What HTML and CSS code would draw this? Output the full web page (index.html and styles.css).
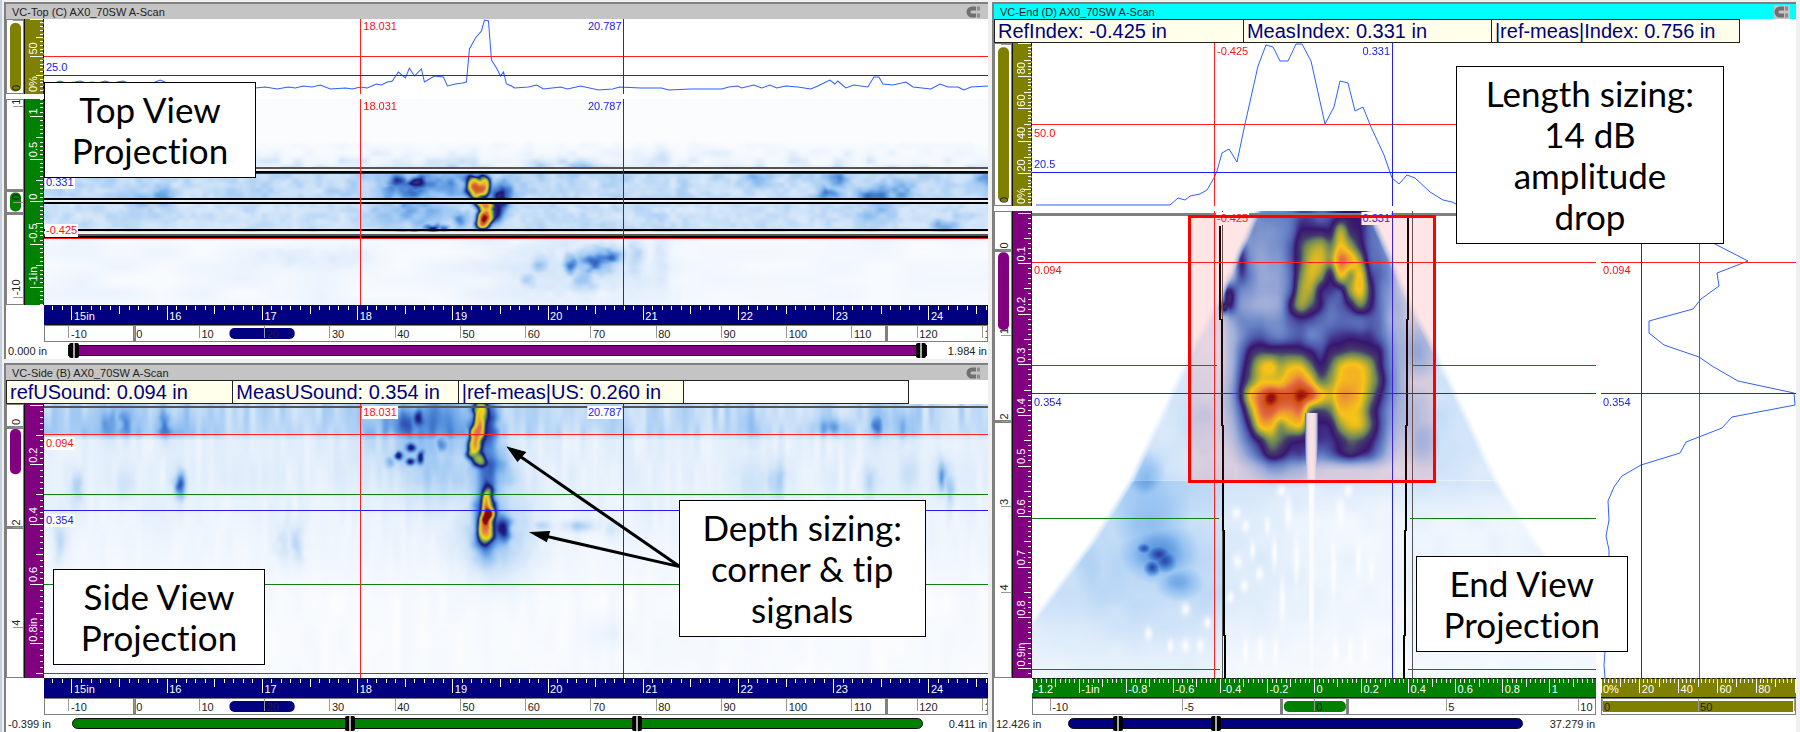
FILE: index.html
```html
<!DOCTYPE html>
<html lang="en">
<head>
  <meta charset="UTF-8" />
  <meta name="viewport" content="width=device-width, initial-scale=1.0" />
  <title>AX0_70SW A-Scan</title>
  <link rel="stylesheet" href="styles.css">
</head>
<body>

  <main class="workspace">
    <div class="column">

      <!-- Top view -->
      <section class="panel">
        <header class="title-bar">
          <h2>VC-Top (C) AX0_70SW A-Scan</h2>
          <svg class="magnet" viewBox="0 0 16 14"><path d="M10 3.500H6a3.500 3.500 0 0 0 0 7H10" /><path class="tip" d="M11 3.500h3M11 10.500h3" /></svg>
        </header>
        <div class="views views-top">
          <div class="overview vertical" data-from="100" data-to="0" data-step="100" data-thumb="96,2" data-thumb-color="olive"></div>
          <div class="ruler vertical olive" data-from="100" data-to="0" data-step="50" data-mid="25" data-minor="5" data-skip="100" data-unit="%" data-unit-at="0"></div>
          <div class="plot">
            <svg class="lines" viewBox="44 19 943 75" preserveAspectRatio="none">
              <polyline class="trace" points="44,83 52,84 60,81 66,83 75,82 80,81 86,83 92,82 98,83 105,81 112,83 123,81 128,83 135,83 150,84 160,80 167,83 200,86 255,88 265,87 277,89 288,87 295,88 303,86 312,87 320,85 330,89 345,88 352,89 360,87 367,88 376,84 381,85 387,82 392,81 398,72 405,78 409,68 414,76 421,69 424,82 434,76 443,77 447,86 455,84 462,83 466,82 469,49 475,38 481,31 484,20 488,21 491,60 496,68 500,76 503,72 506,84 511,86 514,88 528,87 536,85 543,89 560,87 567,89 580,86 598,90 612,89 619,87 640,88 661,88 668,90 690,89 721,89 728,87 737,86 741,88 753,85 761,88 769,85 776,88 785,86 797,87 810,89 817,86 829,80 834,84 837,81 845,88 853,85 867,87 873,77 878,77 882,84 892,85 905,82 912,87 930,89 939,84 947,87 957,87 963,90 970,87 987,86" />
              <path class="red" d="M44 56H987M360 19V94" />
              <path class="blue" d="M44 75H987M623 19V94" />
            </svg>
            <span class="tag red" data-x="362" data-y="20">18.031</span>
            <span class="tag blue before" data-x="622" data-y="20">20.787</span>
            <span class="tag blue" data-x="45" data-y="61">25.0</span>
          </div>

          <div class="overview vertical second" data-from="10.7" data-to="-10.7" data-step="10" data-thumb="1,-1" data-thumb-color="green" data-bounds="1.2,-1.2"></div>
          <div class="ruler vertical green second" data-from="1.205" data-to="-1.21" data-step="0.5" data-mid="0.25" data-minor="0.05" data-unit="in" data-unit-at="-1"></div>
          <div class="plot second">
            <canvas id="topScan" width="943" height="206"></canvas>
            <svg class="lines" viewBox="44 99 943 206" preserveAspectRatio="none">
              <path class="gap" d="M44 170H987M44 201H987M44 233H987" />
              <path class="gray" d="M44 168H987M44 235H987" />
              <path class="black" d="M44 172H987M44 199H987M44 203H987M44 230H987M44 237H987" />
              <path class="red" d="M44 238H987M360 99V305" />
              <path class="blue" d="M44 173H987M623 99V305" />
            </svg>
            <span class="tag red" data-x="362" data-y="100">18.031</span>
            <span class="tag blue before" data-x="622" data-y="100">20.787</span>
            <span class="tag blue filled" data-x="45" data-y="176">0.331</span>
            <span class="tag red filled" data-x="45" data-y="224">-0.425</span>
          </div>

          <div class="ruler horizontal navy under" data-from="14.706" data-to="24.62" data-step="1" data-mid="0.5" data-minor="0.1" data-unit="in" data-unit-at="15"></div>
          <div class="overview horizontal under" data-from="-13.67" data-to="130.7" data-step="10" data-thumb="14.6,24.6" data-thumb-color="navy" data-bounds="0,115.3"></div>
          <div class="slider-row">
            <output>0.000 in</output>
            <div class="slider purple">
              <input type="range" aria-label="Depth start" min="0" max="100" value="0">
              <input type="range" aria-label="Depth end" min="0" max="100" value="100">
            </div>
            <output>1.984 in</output>
          </div>
        </div>
        <p class="note note-top">Top View Projection</p>
      </section>

      <!-- Side view -->
      <section class="panel">
        <header class="title-bar">
          <h2>VC-Side (B) AX0_70SW A-Scan</h2>
          <svg class="magnet" viewBox="0 0 16 14"><path d="M10 3.500H6a3.500 3.500 0 0 0 0 7H10" /><path class="tip" d="M11 3.500h3M11 10.500h3" /></svg>
        </header>
        <div class="readouts four">
          <span>refUSound: 0.094 in</span>
          <span>MeasUSound: 0.354 in</span>
          <span>|ref-meas|US: 0.260 in</span>
          <span class="empty"></span>
        </div>
        <div class="views views-side">
          <div class="overview vertical" data-from="-0.44" data-to="4.98" data-step="2" data-thumb="0.04,0.94" data-thumb-color="purple" data-bounds="0,2"></div>
          <div class="ruler vertical purple" data-from="-0.004" data-to="0.915" data-step="0.2" data-mid="0.1" data-minor="0.02" data-skip="0" data-unit="in" data-unit-at="0.8"></div>
          <div class="plot">
            <canvas id="sideScan" width="943" height="273"></canvas>
            <svg class="lines" viewBox="44 404 943 273" preserveAspectRatio="none">
              <path class="gray" d="M44 407H987" />
              <path class="green" d="M44 494H987M44 584H987M44 673H987" />
              <path class="red" d="M44 434H987M360 404V677" />
              <path class="blue" d="M44 510H987M623 404V677" />
              <path class="arrow" d="M679 566L518 455M679 566L542 535" />
              <path class="arrow-head" d="M507 447L525 452L517 461ZM530 532L549 531L546 541Z" />
            </svg>
            <span class="tag red filled" data-x="362" data-y="406">18.031</span>
            <span class="tag blue filled before" data-x="622" data-y="406">20.787</span>
            <span class="tag red filled" data-x="45" data-y="437">0.094</span>
            <span class="tag blue filled" data-x="45" data-y="514">0.354</span>
          </div>

          <div class="ruler horizontal navy under" data-from="14.706" data-to="24.62" data-step="1" data-mid="0.5" data-minor="0.1" data-unit="in" data-unit-at="15"></div>
          <div class="overview horizontal under" data-from="-13.67" data-to="130.7" data-step="10" data-thumb="14.6,24.6" data-thumb-color="navy" data-bounds="0,115.3"></div>
          <div class="slider-row">
            <output>-0.399 in</output>
            <div class="slider green rounded">
              <input type="range" aria-label="Index start" min="0" max="1000" value="324">
              <input type="range" aria-label="Index end" min="0" max="1000" value="666">
            </div>
            <output>0.411 in</output>
          </div>
        </div>
        <p class="note note-side">Side View Projection</p>
        <p class="note note-depth">Depth sizing: corner &amp; tip signals</p>
      </section>
    </div>

    <!-- End view -->
    <section class="panel active">
      <header class="title-bar">
        <h2>VC-End (D) AX0_70SW A-Scan</h2>
        <svg class="magnet" viewBox="0 0 16 14"><path d="M10 3.500H6a3.500 3.500 0 0 0 0 7H10" /><path class="tip" d="M11 3.500h3M11 10.500h3" /></svg>
      </header>
      <div class="readouts three">
        <span>RefIndex: -0.425 in</span>
        <span>MeasIndex: 0.331 in</span>
        <span>|ref-meas|Index: 0.756 in</span>
      </div>
      <div class="views views-end">
        <div class="overview vertical" data-from="100" data-to="0" data-step="100" data-thumb="98,2" data-thumb-color="olive"></div>
        <div class="ruler vertical olive" data-from="100.5" data-to="0" data-step="20" data-mid="10" data-minor="2" data-skip="100" data-unit="%" data-unit-at="0"></div>
        <div class="plot">
          <svg class="lines" viewBox="1032 43 564 163" preserveAspectRatio="none">
            <polyline class="trace" points="1036,205 1170,205 1178,198 1185,200 1190,196 1200,194 1207,190 1214,178 1217,171 1222,153 1229,149 1237,162 1245,124 1258,66 1266,45 1273,47 1280,61 1288,61 1296,44 1302,44 1311,61 1325,124 1334,107 1340,81 1348,83 1355,111 1363,107 1371,127 1384,155 1392,178 1399,184 1407,175 1415,178 1430,192 1443,200 1452,202 1460,206" />
            <path class="red" d="M1032 124H1596M1214 43V206" />
            <path class="blue" d="M1032 172H1596M1392 43V206" />
          </svg>
          <span class="tag red" data-x="1216" data-y="45">-0.425</span>
          <span class="tag blue before" data-x="1391" data-y="45">0.331</span>
          <span class="tag red" data-x="1033" data-y="127">50.0</span>
          <span class="tag blue" data-x="1033" data-y="158">20.5</span>
        </div>

        <div class="overview vertical second" data-from="-0.45" data-to="4.99" data-step="1" data-thumb="0.02,0.93" data-thumb-color="purple" data-bounds="0,2"></div>
        <div class="ruler vertical purple second" data-from="-0.004" data-to="0.919" data-step="0.1" data-mid="0.05" data-minor="0.01" data-skip="0" data-unit="in" data-unit-at="0.9"></div>
        <div class="plot second">
          <canvas id="endScan" width="564" height="467"></canvas>
          <svg class="lines" viewBox="1032 211 564 467" preserveAspectRatio="none">
            <path class="frame-line" d="M1032 214H1596" />
            <path class="green" d="M1032 365H1217M1412 365H1596M1032 518H1219M1410 518H1596M1032 669H1220M1408 669H1596" />
            <path class="gray thin" d="M1222 211V678M1412 211V678" />
            <path class="black" d="M1220 226V319L1222 320V425L1223 426V530L1224 531V635L1225 636V678M1408 218V319L1407 320V425L1406 426V530L1405 531V635L1404 636V678" />
          </svg>
          <span class="tag red filled" data-x="1216" data-y="212">-0.425</span>
          <span class="tag blue filled before" data-x="1391" data-y="212">0.331</span>
          <svg class="lines" viewBox="1032 211 564 467" preserveAspectRatio="none">
            <path class="red" d="M1032 262H1596M1214 211V678" />
            <path class="blue" d="M1032 393H1596M1392 211V678" />
            <rect class="region" x="1189" y="216" width="245" height="265" />
          </svg>
          <span class="tag red" data-x="1033" data-y="264">0.094</span>
          <span class="tag blue" data-x="1033" data-y="396">0.354</span>
        </div>
        <div class="plot side-trace second">
          <svg class="lines" viewBox="1601 211 195 467" preserveAspectRatio="none">
            <polyline class="trace" points="1690,228 1713,243 1748,261 1717,273 1719,286 1701,299 1693,309 1649,321 1649,333 1664,345 1699,357 1712,366 1738,381 1794,393 1795,405 1732,417 1722,428 1686,442 1680,453 1641,465 1622,476 1614,487 1608,501 1609,520 1606,536 1609,550 1609,600 1605,651 1604,665 1605,678" />
            <path class="red" d="M1601 262H1796M1699 211V678" />
            <path class="blue" d="M1601 393H1796M1641 211V678" />
          </svg>
          <span class="tag red" data-x="1602" data-y="264">0.094</span>
          <span class="tag blue" data-x="1602" data-y="396">0.354</span>
        </div>

        <div class="ruler horizontal green under" data-from="-1.201" data-to="1.197" data-step="0.2" data-mid="0.1" data-minor="0.02" data-unit="in" data-unit-at="-1"></div>
        <div class="ruler horizontal olive under side-trace" data-from="0" data-to="100.5" data-step="20" data-mid="10" data-minor="2" data-skip="100" data-unit="%" data-unit-at="0"></div>
        <div class="overview horizontal under" data-from="-10.65" data-to="10.63" data-step="5" data-thumb="-1.15,1.2" data-thumb-color="green" data-bounds="-1.25,1.25"></div>
        <div class="overview horizontal under side-trace" data-from="0" data-to="100.5" data-step="50" data-skip="100" data-thumb="0.5,99.5" data-thumb-color="olive" data-square="yes"></div>
        <div class="slider-row">
          <output>12.426 in</output>
          <div class="slider navy rounded">
            <input type="range" aria-label="Scan start" min="0" max="1000" value="99">
            <input type="range" aria-label="Scan end" min="0" max="1000" value="321">
          </div>
          <output>37.279 in</output>
        </div>
      </div>
      <p class="note note-length">Length sizing: 14&nbsp;dB amplitude drop</p>
      <p class="note note-end">End View Projection</p>
    </section>
  </main>

  <script src="scan.js"></script>
</body>
</html>
```

FILE: styles.css
```css
* {
  box-sizing: border-box;
}

body {
  margin: 0;
  font-family: "Liberation Sans", Arial, sans-serif;
  font-size: 11px;
  line-height: 14px;
  color: #222;
  background-color: #f0f0f0;
}

.workspace {
  display: grid;
  grid-template-columns: minmax(0, 984fr) minmax(0, 804fr);
  gap: 4px;
  height: 100vh;
  min-height: 600px;
  padding: 2px 4px 0 2px;
  border-left: 2px solid #c5d0df;
}

.column {
  display: grid;
  grid-template-rows: minmax(0, 357fr) minmax(0, 369fr);
  gap: 4px;
  min-height: 0;
}

.panel {
  position: relative;
  display: flex;
  flex-direction: column;
  min-width: 0;
  min-height: 0;
  border-top: 2px solid #808080;
  border-left: 2px solid #808080;
  background-color: #fff;
}

.title-bar {
  display: flex;
  flex: none;
  align-items: center;
  justify-content: space-between;
  height: 15px;
  padding: 0 6px;
  background-color: #c4c4c4;
}

.active .title-bar {
  background-color: #00ffff;
}

.title-bar h2 {
  margin: 0;
  font-size: 11px;
  font-weight: normal;
}

.magnet {
  width: 16px;
  height: 14px;
  background-color: #c4c4c4;
  fill: none;
  stroke: #707070;
  stroke-width: 4;
}

.magnet .tip {
  stroke: #8c8c8c;
}

/* Readouts */
.readouts {
  display: grid;
  flex: none;
  height: 24px;
  font-size: 20px;
  line-height: 23px;
  color: #000080;
  border: 1px solid #222;
}

.readouts.four {
  grid-template-columns: repeat(4, 1fr);
  width: 92%;
}

.readouts.three {
  grid-template-columns: repeat(3, 1fr);
  width: 93%;
}

.readouts span {
  padding: 0 3px;
  white-space: nowrap;
  overflow: hidden;
  background-color: #ffffec;
}

.readouts span + span {
  border-left: 1px solid #222;
}

.readouts .empty {
  background-color: #fff;
}

/* Plots and rulers */
.views {
  display: grid;
  flex: 1;
  min-height: 0;
}

.views-top {
  grid-template-columns: 18px 20px minmax(0, 1fr);
  grid-template-rows: minmax(0, 80fr) minmax(0, 206fr) 20px 17px 17px;
}

.views-side {
  grid-template-columns: 18px 20px minmax(0, 1fr);
  grid-template-rows: minmax(0, 1fr) 20px 17px 17px;
}

.views-end {
  grid-template-columns: 18px 20px minmax(0, 564fr) minmax(0, 200fr);
  grid-template-rows: minmax(0, 168fr) minmax(0, 467fr) 20px 17px 17px;
}

.views-top > :not(.second):not(.under):not(.slider-row),
.views-end > :not(.second):not(.under):not(.slider-row) {
  margin-bottom: 5px;
}

.overview.vertical {
  grid-column: 1;
}

.under {
  grid-column: 3;
}

.side-trace {
  grid-column: 4;
  margin-left: 5px;
}

.plot {
  position: relative;
  overflow: hidden;
}

.plot canvas,
.lines {
  position: absolute;
  top: 0;
  left: 0;
  width: 100%;
  height: 100%;
}

.lines path,
.lines polyline,
.lines rect {
  fill: none;
  vector-effect: non-scaling-stroke;
  shape-rendering: crispEdges;
}

.lines .trace {
  stroke: #2f5fff;
  shape-rendering: auto;
}

.lines .red {
  stroke: #ff2020;
}

.lines .blue {
  stroke: #2020f0;
}

.lines .green {
  stroke: #108010;
}

.lines .black {
  stroke: #000;
  stroke-width: 2;
}

.lines .gray {
  stroke: #555;
  stroke-width: 2;
}

.lines .thin {
  stroke-width: 1;
}

.lines .gap {
  stroke: #eef3f8;
  stroke-width: 3;
}

.lines .frame-line {
  stroke: #808080;
  stroke-width: 3;
}

.lines .region {
  fill: rgba(255, 40, 40, 0.12);
  stroke: #ff0000;
  stroke-width: 3;
}

.lines .arrow {
  stroke: #000;
  stroke-width: 3;
  shape-rendering: auto;
}

.lines .arrow-head {
  fill: #000;
  stroke: #000;
  shape-rendering: auto;
}

.tag {
  position: absolute;
  padding: 0 1px;
  line-height: 13px;
}

.tag.before {
  transform: translateX(-100%);
}

.tag.filled {
  background-color: #fff;
}

.tag.red {
  color: #ff1010;
}

.tag.blue {
  color: #2020f0;
}

.ruler {
  overflow: hidden;
}

.ruler.vertical {
  border-left: 1px solid #111;
  border-right: 1px dashed #111;
}

.ruler.horizontal {
  border-top: 1px dashed #111;
  border-bottom: 1px solid #111;
}

.navy {
  background-color: #000080;
}

.green.ruler,
.green.slider {
  background-color: #008000;
}

.olive {
  background-color: #808000;
}

.purple {
  background-color: #800080;
}

.ruler svg,
.overview svg {
  display: block;
  width: 100%;
  height: 100%;
}

.ruler line {
  stroke: #fff;
  shape-rendering: crispEdges;
}

.ruler text {
  fill: #fff;
}

.overview {
  overflow: hidden;
  border: 1px solid #808080;
  background-color: #fff;
}

.overview line {
  stroke: #999;
  shape-rendering: crispEdges;
}

.overview .bound {
  stroke: #808080;
  stroke-width: 3;
}

.overview text {
  fill: #222;
}

/* Range sliders */
.slider-row {
  display: grid;
  grid-column: 1 / 4;
  grid-template-columns: 60px minmax(0, 1fr) 60px;
  align-items: center;
  padding: 0 1px 0 2px;
}

.slider-row output {
  white-space: nowrap;
}

.slider-row output:last-child {
  text-align: right;
}

.slider {
  position: relative;
  height: 11px;
  border: 1px solid #111;
}

.slider.rounded {
  margin: 0 4px;
  border-radius: 6px;
}

.views-end .slider-row {
  grid-template-columns: 68px minmax(0, 1fr) 68px;
}

.slider input {
  position: absolute;
  top: -3px;
  left: 0;
  width: 100%;
  height: 15px;
  margin: 0;
  background: none;
  appearance: none;
  pointer-events: none;
}

.slider input::-webkit-slider-thumb {
  width: 10px;
  height: 15px;
  border: none;
  border-radius: 2px;
  background: linear-gradient(to right, #000 4px, #aaa 4px, #aaa 6px, #000 6px);
  appearance: none;
  pointer-events: auto;
}

/* Callouts */
.note {
  position: absolute;
  width: 212px;
  margin: 0;
  padding: 6px 16px;
  border: 1px solid #000;
  background-color: #fff;
  color: #000;
  font-family: Lato, "Open Sans", sans-serif;
  font-size: 35px;
  font-variant-ligatures: none;
  line-height: 41px;
  text-align: center;
}

.note-top {
  top: 78px;
  left: 38px;
}

.note-side {
  bottom: 67px;
  left: 47px;
}

.note-depth {
  top: 135px;
  left: 68.5%;
  width: 247px;
}

.note-length {
  top: 62px;
  left: 57.6%;
  width: 268px;
  padding: 6px 20px;
}

.note-end {
  bottom: 80px;
  left: 52.6%;
}
```

FILE: scan.js
```js
const NS = 'http://www.w3.org/2000/svg';

function add(parent, name, attrs, text) {
  const el = document.createElementNS(NS, name);
  for (const key in attrs) el.setAttribute(key, attrs[key]);
  if (text !== undefined) el.textContent = text;
  parent.appendChild(el);
  return el;
}

// Rulers: ticks are in percent, so they follow the size of the plot
function drawRuler(box) {
  const d = box.dataset;
  const from = Number(d.from);
  const to = Number(d.to);
  const step = Number(d.step);
  const minor = Number(d.minor || d.step);
  const vertical = box.classList.contains('vertical');
  const overview = box.classList.contains('overview');
  const svg = add(box, 'svg', {});
  const pos = v => (v - from) / (to - from) * 100 + '%';
  const is = (v, s) => Math.abs(v / s - Math.round(v / s)) < 0.001;

  function mark(v, a, b, cls) {
    const p = pos(v);
    add(svg, 'line', vertical
      ? { x1: a, x2: b, y1: p, y2: p, class: cls }
      : { x1: p, x2: p, y1: a, y2: b, class: cls });
  }

  if (d.thumb) {
    const [a, b] = d.thumb.split(',').map(Number);
    const size = Math.abs((b - a) / (to - from)) * 100 + '%';
    const rx = d.square ? 0 : 5;
    add(svg, 'rect', vertical
      ? { x: 3, width: 11, y: pos(a), height: size, rx, fill: d.thumbColor }
      : { y: 2, height: 11, x: pos(a), width: size, rx, fill: d.thumbColor });
  }

  if (d.bounds) d.bounds.split(',').forEach(v => mark(Number(v), 0, 20, 'bound'));

  const low = Math.min(from, to);
  const high = Math.max(from, to);
  for (let i = Math.ceil(low / minor - 0.001); i * minor <= high; i++) {
    const v = i * minor;
    const major = is(v, step);
    if (overview) {
      if (vertical) mark(v, 6, 18, '');
      else mark(v, 0, 12, '');
    } else {
      const len = major ? 14 : is(v, Number(d.mid)) ? 8 : 4;
      if (vertical) mark(v, 19 - len, 19, '');
      else mark(v, 0, len, '');
    }
    if (!major || (d.skip && Math.abs(v - Number(d.skip)) < 0.001)) continue;
    let label = String(Number(v.toFixed(2)));
    if (d.unit && Math.abs(v - Number(d.unitAt)) < 0.001) label += d.unit;
    if (vertical) {
      const holder = add(svg, 'svg', { x: overview ? 13 : 12, y: pos(v), overflow: 'visible' });
      add(holder, 'text', { x: 2, y: 0, transform: 'rotate(-90)' }, label);
    } else {
      add(svg, 'text', { x: pos(v), y: overview ? 12 : 14, dx: 2 }, label);
    }
  }
}

document.querySelectorAll('.ruler, .overview').forEach(drawRuler);

document.querySelectorAll('.tag').forEach(tag => {
  const view = tag.parentNode.querySelector('.lines').viewBox.baseVal;
  tag.style.left = (tag.dataset.x - view.x) / view.width * 100 + '%';
  tag.style.top = (tag.dataset.y - view.y) / view.height * 100 + '%';
});

// Amplitude palette
const palette = [
  [0, 255, 255, 255], [0.06, 238, 245, 253], [0.16, 205, 226, 248], [0.28, 147, 193, 241],
  [0.38, 82, 143, 220], [0.45, 52, 92, 186], [0.51, 28, 20, 122], [0.57, 44, 62, 118],
  [0.62, 84, 144, 100], [0.68, 158, 184, 60], [0.75, 246, 218, 20], [0.82, 236, 170, 50],
  [0.87, 222, 112, 76], [0.93, 204, 88, 16], [0.97, 140, 10, 16], [1.01, 130, 6, 14]
];

function colour(v) {
  v = Math.max(0, Math.min(1, v));
  let i = 1;
  while (palette[i][0] < v) i++;
  const a = palette[i - 1];
  const b = palette[i];
  const t = (v - a[0]) / (b[0] - a[0]);
  return [1, 2, 3].map(k => a[k] + (b[k] - a[k]) * t);
}

function hash(x, y) {
  const n = Math.sin(x * 127.1 + y * 311.7) * 43758.5453;
  return n - Math.floor(n);
}

function noise(x, y) {
  const ix = Math.floor(x);
  const iy = Math.floor(y);
  let fx = x - ix;
  let fy = y - iy;
  fx = fx * fx * (3 - 2 * fx);
  fy = fy * fy * (3 - 2 * fy);
  const top = hash(ix, iy) * (1 - fx) + hash(ix + 1, iy) * fx;
  const bottom = hash(ix, iy + 1) * (1 - fx) + hash(ix + 1, iy + 1) * fx;
  return top * (1 - fy) + bottom * fy;
}

// Each spot is [x, y, radius x, radius y, amplitude].
// Weak spots fade out slowly and add to the background, strong ones have a steep edge.
function spots(list, x, y, base, grain) {
  let sum = 0;
  let weak = 0;
  for (const [cx, cy, rx, ry, amp] of list) {
    const dx = (x - cx) / rx;
    const dy = (y - cy) / ry;
    const r = dx * dx + dy * dy;
    if (r > 8) continue;
    if (amp < 0.45) weak = Math.max(weak, amp * grain * Math.exp(-r * 0.8));
    else sum += Math.pow(amp * Math.exp(-Math.pow(r, 1.2)), 3);
  }
  const low = Math.max(base, 0) + weak * 0.9;
  return Math.cbrt(sum + low * low * low);
}

function paint(id, left, top, field) {
  const canvas = document.getElementById(id);
  const ctx = canvas.getContext('2d');
  const image = ctx.createImageData(canvas.width, canvas.height);
  let p = 0;
  for (let y = 0; y < canvas.height; y++) {
    for (let x = 0; x < canvas.width; x++) {
      const c = colour(field(left + x, top + y));
      image.data[p++] = c[0];
      image.data[p++] = c[1];
      image.data[p++] = c[2];
      image.data[p++] = 255;
    }
  }
  ctx.putImageData(image, 0, 0);
}

const topSpots = [
  [473, 184, 9, 10, 0.76], [483, 183, 8, 10, 0.77], [478, 191, 13, 10, 0.86],
  [484, 205, 12, 7, 0.84], [485, 217, 10, 12, 0.96], [482, 224, 9, 8, 0.74],
  [496, 212, 9, 14, 0.5], [501, 196, 9, 14, 0.42], [396, 181, 12, 8, 0.3], [417, 183, 12, 8, 0.36],
  [405, 190, 26, 12, 0.24], [415, 210, 34, 16, 0.2], [432, 228, 8, 5, 0.4],
  [409, 234, 14, 3, 0.52], [443, 228, 5, 4, 0.4], [460, 220, 8, 8, 0.24], [440, 182, 50, 14, 0.18],
  [603, 256, 18, 10, 0.44], [595, 262, 20, 13, 0.42], [571, 264, 8, 11, 0.34],
  [539, 263, 9, 11, 0.22], [528, 280, 9, 8, 0.18], [584, 281, 14, 15, 0.22], [575, 268, 70, 32, 0.1],
  [634, 257, 10, 20, 0.16], [660, 262, 9, 28, 0.1], [285, 257, 26, 10, 0.08], [345, 258, 26, 10, 0.06],
  [829, 194, 12, 6, 0.24], [838, 181, 9, 8, 0.2], [877, 196, 16, 9, 0.26], [877, 212, 18, 18, 0.12],
  [895, 192, 18, 10, 0.16], [754, 180, 10, 7, 0.14], [944, 226, 12, 6, 0.18], [985, 181, 10, 9, 0.18],
  [163, 197, 9, 10, 0.18], [140, 200, 16, 16, 0.1], [661, 157, 8, 9, 0.12], [578, 166, 16, 6, 0.18], [537, 166, 11, 6, 0.18]
];

paint('topScan', 44, 99, (x, y) => {
  const n = noise(x / 11, y / 8);
  const fine = noise(x / 6 + 40, y / 5);
  let base;
  if (y < 168) base = 0.015 + Math.max(0, (y - 138) / 30) * (0.03 + 0.14 * n * n);
  else if (y < 203) base = 0.12 + n * 0.08 + fine * 0.05;
  else if (y < 232) base = 0.1 + n * 0.07 + fine * 0.05;
  else base = 0.02 + 0.04 * noise(x / 40, y / 14) * (x < 680 ? 1.3 : 0.8);
  const grain = 0.7 + 0.6 * noise(x / 9 + 90, y / 7);
  return spots(topSpots, x + n * 3 - 1, y + fine * 3 - 1, base, grain);
});

const sideSpots = [
  [479, 412, 9, 20, 0.74], [476, 432, 9, 20, 0.84], [472, 447, 9, 14, 0.77], [479, 459, 8, 10, 0.65],
  [486, 426, 15, 36, 0.46], [486, 503, 9, 22, 0.77], [486, 516, 8, 12, 0.98], [484, 530, 9, 16, 0.77],
  [485, 520, 15, 44, 0.56], [502, 528, 10, 18, 0.5], [488, 470, 20, 32, 0.34], [496, 530, 32, 44, 0.2],
  [418, 417, 7, 12, 0.46], [404, 424, 24, 18, 0.24], [399, 455, 6, 6, 0.52], [410, 447, 6, 6, 0.5],
  [410, 461, 6, 5, 0.5], [420, 457, 6, 9, 0.52], [441, 444, 6, 9, 0.38], [388, 461, 7, 7, 0.24],
  [430, 434, 60, 42, 0.2], [440, 470, 38, 32, 0.18], [179, 484, 5, 12, 0.36], [76, 486, 5, 16, 0.16],
  [59, 541, 6, 18, 0.16], [283, 543, 6, 18, 0.13], [296, 543, 6, 18, 0.15], [123, 485, 10, 12, 0.06],
  [876, 425, 6, 11, 0.3], [878, 418, 12, 24, 0.14], [830, 427, 14, 8, 0.18], [903, 425, 10, 14, 0.13],
  [751, 427, 10, 16, 0.1], [776, 480, 7, 18, 0.18], [748, 484, 14, 22, 0.08], [940, 476, 6, 15, 0.26],
  [948, 488, 5, 14, 0.16], [910, 474, 8, 18, 0.1], [868, 482, 6, 16, 0.12], [578, 525, 14, 5, 0.2],
  [541, 525, 10, 5, 0.16], [612, 528, 8, 8, 0.08], [164, 426, 5, 14, 0.16], [125, 422, 5, 16, 0.15],
  [107, 422, 5, 16, 0.12], [606, 632, 16, 14, 0.05]
];

paint('sideScan', 44, 404, (x, y) => {
  const streak = noise(x / 6, y / 34);
  const fade = (a, b) => Math.max(0, Math.min(1, (y - a) / (b - a)));
  const left = Math.max(0, Math.min(1, (225 - x) / 30));
  const band = 0.12 + streak * 0.12 + left * (0.03 + (y - 404) / 500);
  const middle = 0.06 + 0.05 * streak;
  const deep = 0.015 + 0.025 * noise(x / 9, y / 40);
  let base = band + (middle - band) * fade(432, 440);
  base += (deep - base) * fade(480, 600);
  const grain = 0.8 + 0.4 * noise(x / 7 + 90, y / 20);
  return spots(sideSpots, x + noise(x / 8, y / 8) * 4 - 2, y, base, grain);
});

// Measured amplitudes of the indication, every 10 columns and 15 rows
const cells = [
  [0, 0, 30, 36, 38, 38, 40, 46, 46, 42, 46, 50, 51, 50, 42, 36, 10, 0],
  [0, 0, 32, 34, 34, 36, 40, 51, 52, 52, 52, 68, 55, 51, 42, 36, 15, 0],
  [0, 36, 34, 32, 34, 36, 44, 57, 65, 68, 62, 75, 66, 54, 42, 38, 25, 0],
  [5, 48, 36, 30, 32, 34, 44, 58, 71, 72, 66, 86, 80, 66, 44, 40, 32, 5],
  [20, 46, 38, 30, 30, 32, 42, 62, 72, 66, 53, 74, 66, 75, 50, 42, 34, 15],
  [50, 38, 34, 30, 30, 32, 44, 66, 68, 52, 48, 48, 66, 75, 55, 40, 32, 20],
  [51, 34, 30, 28, 28, 32, 52, 66, 60, 51, 42, 44, 52, 62, 52, 40, 30, 25],
  [30, 36, 36, 36, 34, 36, 44, 48, 46, 42, 40, 42, 42, 42, 44, 40, 28, 24],
  [25, 34, 42, 44, 40, 38, 42, 44, 38, 40, 46, 48, 49, 48, 48, 42, 32, 26],
  [25, 40, 52, 56, 55, 55, 55, 54, 50, 46, 53, 55, 58, 57, 54, 50, 36, 28],
  [25, 44, 58, 71, 75, 68, 72, 72, 62, 52, 60, 72, 76, 74, 66, 52, 38, 28],
  [28, 48, 62, 73, 74, 74, 82, 86, 76, 62, 66, 76, 78, 77, 68, 56, 40, 28],
  [30, 52, 76, 88, 97, 92, 92, 97, 92, 78, 72, 82, 82, 76, 64, 51, 38, 28],
  [28, 44, 66, 86, 90, 84, 84, 86, 62, 58, 62, 76, 76, 72, 58, 46, 34, 26],
  [24, 38, 55, 76, 78, 66, 72, 74, 54, 50, 52, 66, 73, 72, 60, 46, 32, 24],
  [20, 32, 44, 54, 64, 60, 54, 52, 50, 48, 48, 54, 60, 58, 52, 42, 28, 20],
  [16, 24, 34, 44, 54, 52, 46, 46, 42, 38, 42, 48, 52, 48, 44, 34, 22, 16],
  [12, 16, 20, 26, 32, 32, 28, 26, 20, 18, 16, 16, 16, 16, 16, 14, 12, 10]
];

function cubic(a, b, c, d, t) {
  return b + 0.5 * t * (c - a + t * (2 * a - 5 * b + 4 * c - d + t * (3 * (b - c) + d - a)));
}

function cellValue(x, y) {
  const cx = Math.max(0, Math.min(17, (x - 1230) / 10));
  const cy = Math.max(0, Math.min(17, (y - 215) / 15));
  const ix = Math.floor(cx);
  const iy = Math.floor(cy);
  const clamp = i => Math.max(0, Math.min(17, i));
  const rows = [-1, 0, 1, 2].map(k => {
    const row = cells[clamp(iy + k)];
    return cubic(row[clamp(ix - 1)], row[ix], row[clamp(ix + 1)], row[clamp(ix + 2)], cx - ix);
  });
  return cubic(rows[0], rows[1], rows[2], rows[3], cy - iy) / 100;
}

const endSpots = [
  [1228, 296, 5, 16, 0.52], [1224, 307, 6, 9, 0.53],
  [1415, 350, 20, 26, 0.2], [1422, 440, 16, 26, 0.16], [1200, 420, 28, 30, 0.08], [1410, 415, 24, 30, 0.14],
  [1158, 552, 36, 30, 0.3], [1144, 548, 9, 7, 0.4], [1158, 554, 16, 12, 0.42], [1152, 567, 10, 10, 0.42],
  [1164, 560, 15, 14, 0.4], [1178, 582, 24, 18, 0.26], [1150, 525, 40, 46, 0.2], [1145, 478, 18, 26, 0.2],
  [1090, 565, 24, 40, 0.14], [1150, 565, 130, 80, 0.12], [1438, 420, 34, 60, 0.06]
];

const gaps = [
  [1185, 609, 6, 9], [1148, 633, 5, 9], [1170, 645, 4, 9], [1185, 645, 5, 9], [1200, 645, 5, 9],
  [1207, 622, 5, 8], [1236, 513, 6, 8], [1237, 561, 6, 9], [1259, 573, 5, 9], [1245, 526, 5, 8],
  [1281, 490, 6, 8], [1288, 512, 5, 20], [1340, 512, 6, 20], [1348, 490, 6, 8], [1230, 597, 5, 8],
  [1244, 586, 5, 8], [1252, 550, 4, 12], [1267, 525, 4, 12], [1274, 552, 4, 20], [1296, 560, 4, 30],
  [1333, 570, 4, 40], [1358, 560, 4, 25], [1371, 570, 4, 15], [1282, 600, 4, 28], [1245, 650, 4, 18],
  [1260, 650, 4, 18], [1275, 650, 4, 18], [1335, 650, 4, 18], [1350, 650, 4, 18], [1365, 650, 4, 18]
];

// Half width of the sector at a given row
const sector = [[205, 58], [220, 64], [260, 82], [300, 99], [350, 125], [480, 186], [540, 224], [617, 282], [700, 345]];

function halfWidth(y) {
  let i = 1;
  while (sector[i][0] < y) i++;
  const [y0, w0] = sector[i - 1];
  const [y1, w1] = sector[i];
  return w0 + (w1 - w0) * (y - y0) / (y1 - y0);
}

paint('endScan', 1032, 211, (x, y) => {
  const edge = (halfWidth(y) - Math.abs(x - 1313)) / 8;
  if (edge <= 0) return 0;
  let base = y < 480 ? 0.1 : x > 1222 && x < 1408 ? 0.03 : x < 1222 ? 0.08 : 0.05;
  base += noise(x / 18, y / 18) * 0.03;
  if (y > 480 && y < 520) base += (520 - y) / 600;
  if (y > 600) base *= 1 - (y - 600) / 150;
  let v = spots(endSpots, x, y, base, 1);

  // blend the measured cells into the background
  const outX = Math.max(0, 1230 - x, x - 1400) / 12;
  const outY = Math.max(0, y - 470) / 18;
  const share = Math.max(0, 1 - outX) * Math.max(0, 1 - outY);
  if (share > 0) v = Math.max(v * (1 - share), v * (1 - share) + cellValue(x, y) * share, x < 1234 ? v : 0);

  if (y > 412) {
    const slit = Math.abs(x - 1311) / 7;
    if (slit < 1) v = Math.min(v, 0.02 + 0.6 * Math.pow(slit, 3));
  }
  for (const [gx, gy, rx, ry] of gaps) {
    const r = ((x - gx) / rx) ** 2 + ((y - gy) / ry) ** 2;
    v *= 1 - 0.85 * Math.exp(-r * 2);
  }
  return v * Math.min(1, edge);
});
```
